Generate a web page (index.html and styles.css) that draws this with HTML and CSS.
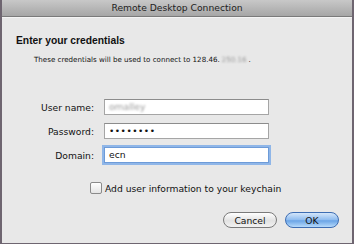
FILE: index.html
```html
<!DOCTYPE html>
<html lang="en">
<head>
    <meta charset="UTF-8">
    <title>Remote Desktop Connection</title>
    <link rel="stylesheet" href="styles.css">
</head>
<body>
    <div class="window">
        <div class="titlebar">Remote Desktop Connection</div>

        <div class="content">
            <h1>Enter your credentials</h1>
            <p class="info">These credentials will be used to connect to 128.46.<span class="blur ip">250.16</span>.</p>

            <!-- LOGIN FORM -->
            <div class="form">
                <div class="row">
                    <label>User name:</label>
                    <div class="field"><span class="blur">omalley</span></div>
                </div>
                <div class="row">
                    <label>Password:</label>
                    <div class="field dots">&bull;&bull;&bull;&bull;&bull;&bull;&bull;&bull;</div>
                </div>
                <div class="row">
                    <label>Domain:</label>
                    <div class="field focus">ecn</div>
                </div>
            </div>

            <div class="check">
                <span class="box"></span>
                <span>Add user information to your keychain</span>
            </div>

            <div class="buttons">
                <button class="btn">Cancel</button>
                <button class="btn default">OK</button>
            </div>
        </div>
    </div>
</body>
</html>
```

FILE: styles.css
```css
body {
    margin: 0;
    font-family: "DejaVu Sans", sans-serif;
    background-color: #e8e8e8;
}
.window {
    width: 354px;
    height: 244px;
    box-sizing: border-box;
    border-left: 2px solid #6e6570;
    border-right: 2px solid #6e6570;
    border-bottom: 1px solid #6e6570;
    background-color: #e8e8e8;
    display: flex;
    flex-direction: column;
}
.titlebar {
    height: 16px;
    line-height: 16px;
    text-align: center;
    font-size: 9.2px;
    color: #222;
    background: linear-gradient(#c8c8c8, #a6a6a6);
    border-bottom: 1px solid #7a7a7a;
}
.content {
    flex: 1;
    padding: 16px 0 0 14px;
    border-top: 1px solid #f4f4f4;
}
h1 {
    margin: 0;
    font-family: "Liberation Sans", Arial, sans-serif;
    font-size: 10.3px;
    line-height: 14px;
    font-weight: bold;
    color: #111;
}
.info {
    margin: 6px 0 0 18px;
    font-size: 7.1px;
    line-height: 12px;
    color: #111;
}
.blur {
    color: #999;
    filter: blur(1.2px);
}
.ip {
    padding: 0 2px;
}
.form {
    margin-top: 33px;
    display: flex;
    flex-direction: column;
    gap: 8px;
}
.row {
    display: flex;
    align-items: center;
}
.row label {
    width: 78px;
    text-align: right;
    font-size: 9.2px;
    color: #111;
}
.field {
    margin-left: 10px;
    width: 165px;
    height: 16px;
    box-sizing: border-box;
    border: 1px solid #a5a5a5;
    border-top-color: #8c8c8c;
    background-color: #fff;
    font-size: 9.2px;
    line-height: 14px;
    padding-left: 4px;
    color: #111;
}
.dots {
    font-size: 9px;
    letter-spacing: 0.5px;
}
.focus {
    border: 1px solid #6d9bd8;
    box-shadow: 0 0 0 2px #8fb6e8;
}
.check {
    margin: 19px 0 0 74px;
    height: 12px;
    display: flex;
    align-items: center;
    gap: 3px;
    font-size: 9.2px;
    color: #111;
}
.box {
    width: 10px;
    height: 10px;
    border: 1px solid #8a8a8a;
    border-radius: 2px;
    background: linear-gradient(#fff, #e4e4e4);
}
.buttons {
    margin: 18px 13px 0 0;
    display: flex;
    justify-content: flex-end;
    gap: 8px;
}
.btn {
    width: 54px;
    height: 16px;
    padding: 0;
    border: 1px solid #7a7a7a;
    border-radius: 8px;
    background: linear-gradient(#ffffff, #e2e2e2 55%, #f2f2f2);
    font-family: "DejaVu Sans", sans-serif;
    font-size: 9.2px;
    color: #111;
}
.default {
    border-color: #3d6db3;
    background: linear-gradient(#d4e6fa, #8dbbef 50%, #6aa4e6 55%, #b6dafb);
}
```
